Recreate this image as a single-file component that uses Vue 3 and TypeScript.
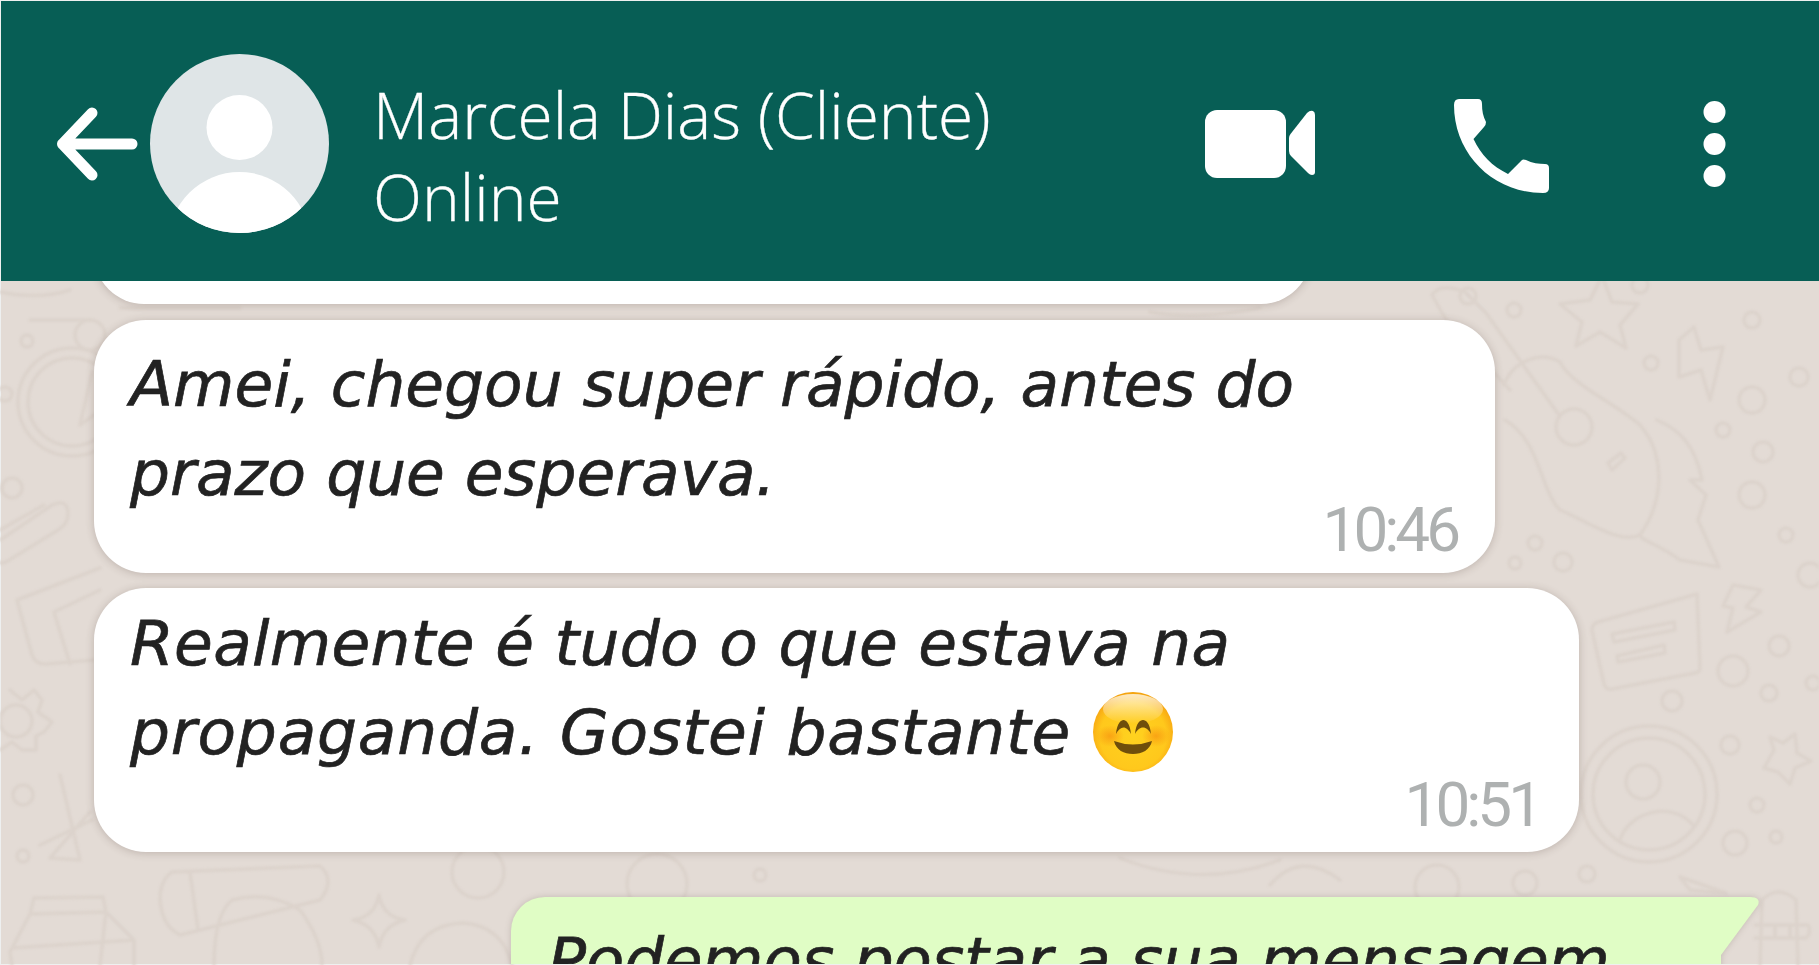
<script setup lang="ts">
const circles: [number, number, number][] = [
  [1779, 646, 10], [1733, 671, 15], [1769, 693, 8], [1672, 701, 10], [1730, 745, 9],
  [1757, 805, 7], [1776, 837, 6], [1735, 843, 12], [1587, 874, 8], [1813, 683, 7],
  [1810, 575, 12], [1514, 310, 7], [1651, 363, 7], [1752, 320, 8], [1799, 377, 9],
  [1752, 400, 13], [1723, 430, 7], [1763, 452, 10], [1752, 495, 13], [1786, 535, 7],
  [1563, 562, 9], [1535, 543, 7], [1515, 563, 6], [27, 341, 6], [5, 394, 7],
  [12, 488, 10], [23, 795, 10], [23, 856, 6], [1525, 883, 12], [1437, 887, 22],
  [657, 884, 30], [478, 872, 26], [760, 875, 6], [1640, 285, 8], [1468, 296, 8]
]
</script>

<template>
  <div class="page">
    <svg class="doodles" viewBox="0 0 1819 965" fill="none" stroke="#dcd3cc" stroke-width="3.5" stroke-linejoin="round" stroke-linecap="round">
      <circle v-for="(c, i) in circles" :key="i" :cx="c[0]" :cy="c[1]" :r="c[2]" />
      <!-- note -->
      <path d="M1598 622 L1697 594 L1700 668 Q1700 672 1695 673 L1612 689 Q1606 690 1604 684 L1592 630 Q1592 624 1598 622Z" />
      <path d="M1612 634 L1674 622 L1675 630 L1614 642Z M1617 656 L1664 645 L1665 653 L1618 662Z" />
      <!-- lightning -->
      <path d="M1733 585 L1761 590 L1746 607 L1761 612 L1727 632 L1733 608 L1723 606Z" />
      <path d="M1694 327 L1679 340 L1679 377 L1701 370 L1710 400 L1723 347 L1701 350Z" />
      <!-- profile -->
      <circle cx="1649" cy="794" r="68" /><circle cx="1649" cy="794" r="56" />
      <circle cx="1643" cy="782" r="17" />
      <path d="M1620 840 C1628 812 1672 800 1693 825" />
      <!-- stars -->
      <path d="M1795 734 L1797 753 L1811 761 L1795 768 L1790 784 L1778 772 L1764 768 L1774 750 L1770 737 L1783 743Z" />
      <path d="M1602 276 L1612 302 L1638 304 L1620 325 L1626 348 L1600 332 L1576 346 L1582 322 L1560 304 L1590 300Z" />
      <path d="M379 895 Q383 917 405 920 Q383 925 379 947 Q375 925 353 920 Q375 917 379 895Z" />
      <!-- guitar -->
      <path d="M1432 295 Q1440 282 1465 292 L1486 313 L1559 415 M1445 318 L1510 390 M1432 295 L1445 318" />
      <path d="M1504 385 C1512 362 1540 350 1560 362 C1572 385 1610 400 1640 425 C1662 450 1668 495 1640 535 C1620 545 1585 520 1560 510 C1540 490 1540 440 1505 420" />
      <circle cx="1574" cy="427" r="18" />
      <path d="M1608 463 L1621 453 L1625 458 L1612 470Z" />
      <path d="M1657 420 C1680 430 1695 445 1702 480 L1690 480 L1706 495 L1698 520 L1719 567 L1680 560 C1660 545 1640 540 1640 535" />
      <!-- compass -->
      <circle cx="72" cy="402" r="54" /><circle cx="72" cy="402" r="44" />
      <circle cx="90" cy="335" r="15" />
      <path d="M92 372 L80 425 L94 415" />
      <!-- paperclip -->
      <path d="M0 540 L52 505 Q68 498 68 514 Q68 524 58 530 L6 562 Q0 564 0 562 M0 530 L44 505" />
      <!-- envelope -->
      <path d="M17 600 L100 568 M17 600 L32 655 Q36 665 46 664 L94 660 M54 612 L70 664 M54 612 L100 590" />
      <!-- gear -->
      <path d="M10 690 L22 700 L34 690 L42 700 L38 712 L52 722 L44 732 L36 736 L36 750 L22 750 L12 742 L0 750" />
      <circle cx="16" cy="721" r="16" />
      <!-- tool -->
      <path d="M60 775 L80 860 L50 858 L90 812 M40 845 L92 820" />
      <!-- carton -->
      <path d="M34 898 L103 897 L106 912 L30 914Z M30 914 L10 952 L12 965 M106 912 L134 940 L134 965 M12 948 L134 940 M106 912 L100 965" />
      <!-- tube -->
      <path d="M172 872 L320 866 Q336 880 320 900 L180 935 Q160 925 160 895 Q162 878 172 872Z M190 872 L198 930" />
      <!-- bag -->
      <path d="M232 900 Q268 890 300 910 Q322 940 322 965 M232 900 Q214 915 214 965" />
      <path d="M410 965 Q420 925 462 923 Q502 925 512 965" />
      <!-- misc bands -->
      <path d="M1120 858 Q1200 890 1280 860 M1270 885 Q1300 850 1340 880" />
      <path d="M1760 965 L1762 900 Q1778 884 1796 900 L1798 965 M1755 925 H1808 Q1812 932 1806 938 H1755 M1775 925 V938 M1790 925 V938" />
      <path d="M1680 877 L1726 893 L1690 890Z" />
      <path d="M0 292 Q40 300 70 290 M30 320 H90 M120 308 H240 M1150 312 Q1200 320 1260 308" />
    </svg>

    <header class="topbar">
      <svg class="arrow" width="90" height="80" viewBox="0 0 90 80" fill="none" stroke="#fff" stroke-width="11" stroke-linecap="round" stroke-linejoin="round">
        <path d="M80 40 H10.5 M40 9 L10.5 40 L40 71" />
      </svg>
      <svg class="avatar" width="179" height="179" viewBox="0 0 179 179">
        <defs><clipPath id="avc"><circle cx="89.5" cy="89.5" r="89.5" /></clipPath></defs>
        <circle cx="89.5" cy="89.5" r="89.5" fill="#dfe5e7" />
        <ellipse cx="89.5" cy="73.5" rx="33" ry="32.5" fill="#fff" />
        <circle cx="89.5" cy="189" r="71" fill="#fff" clip-path="url(#avc)" />
      </svg>
      <div class="who">
        <div>Marcela Dias (Cliente)</div>
        <div>Online</div>
      </div>
      <div class="actions">
        <svg width="110" height="68" viewBox="0 0 110 68" fill="#fff">
          <rect width="81" height="68" rx="12" />
          <path d="M84 28 Q84 26 85.5 24 L102 3 Q105 0 108 1 Q110 2 110 5 V62 Q110 65 107 65 Q105 65 103 63 L86 46 Q84 44 84 41Z" />
        </svg>
        <svg class="phone" width="96" height="94" viewBox="0 0 96 94" fill="#fff">
          <path d="M1 6 Q1 0 6 0 H25 Q29 0 29 5 C29 12 30 17 33 23 Q33 26 31 28 L20.5 40 C28 56 39 67 55 75 L69 61 Q70 60 73 61 C79 64 86 65 92 65 Q96 65 96 69 V89 Q96 94 90 94 C40 94 1 55 1 6Z" />
        </svg>
        <svg class="dots" width="23" height="86" viewBox="0 0 23 86" fill="#fff">
          <circle cx="11.5" cy="11" r="11" /><circle cx="11.5" cy="43" r="11" /><circle cx="11.5" cy="75" r="11" />
        </svg>
      </div>
    </header>

    <main class="chat">
      <div class="bubble cut"></div>
      <div class="bubble first">
        <p>Amei, chegou super rápido, antes do<br />prazo que esperava.</p>
        <span class="time t1">10:46</span>
      </div>
      <div class="bubble second">
        <p>Realmente é tudo o que estava na<br /><span class="wide">propaganda. Gostei bastante</span><svg class="emoji" width="80" height="80" viewBox="0 0 80 80">
            <defs>
              <radialGradient id="eb" cx=".5" cy=".55" r=".55">
                <stop offset="0" stop-color="#ffd21f" /><stop offset=".75" stop-color="#ffc81c" /><stop offset=".93" stop-color="#f9ad14" /><stop offset="1" stop-color="#f2a00d" />
              </radialGradient>
              <linearGradient id="eh" x1="0" y1="0" x2="0" y2="1">
                <stop offset="0" stop-color="#fff" stop-opacity=".75" /><stop offset="1" stop-color="#fff" stop-opacity="0" />
              </linearGradient>
              <radialGradient id="ec">
                <stop offset="0" stop-color="#f47c0a" stop-opacity=".5" /><stop offset="1" stop-color="#f47c0a" stop-opacity="0" />
              </radialGradient>
            </defs>
            <circle cx="40" cy="40" r="40" fill="url(#eb)" />
            <ellipse cx="40" cy="17" rx="30" ry="15" fill="url(#eh)" />
            <ellipse cx="17" cy="44" rx="14" ry="11" fill="url(#ec)" />
            <ellipse cx="63" cy="44" rx="14" ry="11" fill="url(#ec)" />
            <path fill="#6f4e0b" d="M23 42 C24 31 28 28 30.5 28 C33 28 37 31 38 42 C36 38 33 35.5 30.5 35.5 C28 35.5 25 38 23 42Z M42 42 C43 31 47 28 50 28 C53 28 57 31 58 42 C56 38 53 35.5 50 35.5 C47 35.5 44 38 42 42Z M21 49 Q40 56 59 49 C57 58 49 62 40 62 C31 62 23 58 21 49Z" />
          </svg></p>
        <span class="time t2">10:51</span>
      </div>
      <div class="bubble sent">
        <p>Podemos postar a sua mensagem</p>
      </div>
    </main>
  </div>
</template>

<style>
html, body { margin: 0; background: #eef0f0; overflow: hidden; }
</style>

<style scoped>
.page {
  position: relative;
  width: 1819px;
  height: 965px;
  box-sizing: border-box;
  padding: 1px 0 1px 1px;
  display: flex;
  flex-direction: column;
  overflow: hidden;
}
.page::before {
  content: "";
  position: absolute;
  inset: 1px 0 1px 1px;
  background: #e3dbd5;
}
.doodles {
  position: absolute;
  left: 0;
  top: 0;
  width: 1819px;
  height: 965px;
  filter: blur(0.8px);
}
.topbar {
  position: relative;
  z-index: 2;
  flex: none;
  height: 280px;
  box-sizing: border-box;
  padding: 5px 93px 0 51px;
  display: flex;
  align-items: center;
  background: #075e55;
  color: #fff;
}
.arrow { flex: none; }
.avatar { flex: none; margin-left: 8px; }
.who {
  margin-left: 44px;
  padding-top: 25px;
  font-family: "Open Sans", sans-serif;
  font-weight: 300;
  font-size: 64px;
  line-height: 82px;
  white-space: nowrap;
  -webkit-text-stroke: 0.3px #fff;
}
.actions {
  margin-left: auto;
  display: flex;
  align-items: center;
}
.phone { margin-left: 138px; margin-top: 4px; }
.dots { margin-left: 154px; }
.chat {
  position: relative;
  z-index: 1;
  flex: 1;
  min-height: 0;
  overflow: hidden;
  padding-left: 93px;
  display: flex;
  flex-direction: column;
  align-items: flex-start;
}
.bubble {
  position: relative;
  flex: none;
  box-sizing: border-box;
  background: #fff;
  border-radius: 52px;
  box-shadow: 0 1px 9px rgba(70, 50, 40, 0.24);
  padding-left: 36px;
  font-family: "DejaVu Sans", sans-serif;
  font-style: italic;
  font-size: 63px;
  line-height: 89px;
  color: #222;
  white-space: nowrap;
  -webkit-text-stroke: 0.7px #222;
}
.bubble p { margin: 0; }
.cut { width: 1217px; height: 100px; margin-top: -77px; }
.first { width: 1401px; margin-top: 16px; padding-top: 20px; padding-bottom: 55px; }
.second { width: 1485px; margin-top: 15px; padding-top: 11px; padding-bottom: 75px; letter-spacing: 0.3px; }
.wide { letter-spacing: 0.8px; }
.sent {
  width: 1210px;
  margin-top: 45px;
  margin-left: 417px;
  padding-top: 19px;
  padding-left: 37px;
  padding-bottom: 40px;
  letter-spacing: -0.3px;
  background: #e0fdc5;
  border-radius: 34px 0 0 34px;
  box-shadow: none;
  filter: drop-shadow(0 0 3px rgba(70, 50, 40, 0.2));
}
.sent::after {
  content: "";
  position: absolute;
  left: 100%;
  top: 0;
  width: 40px;
  height: 58px;
  background: #e0fdc5;
  clip-path: path("M0 0 H29 Q40 0 37 8 L0 58 Z");
}
.emoji { vertical-align: -18px; margin-left: 22px; }
.time {
  position: absolute;
  font-family: Roboto, sans-serif;
  font-style: normal;
  font-size: 62px;
  letter-spacing: -4px;
  line-height: 62px;
  color: #aeb1b1;
  -webkit-text-stroke: 0;
}
.t1 { right: 38px; bottom: 12px; }
.t2 { right: 40px; bottom: 16px; }
</style>
